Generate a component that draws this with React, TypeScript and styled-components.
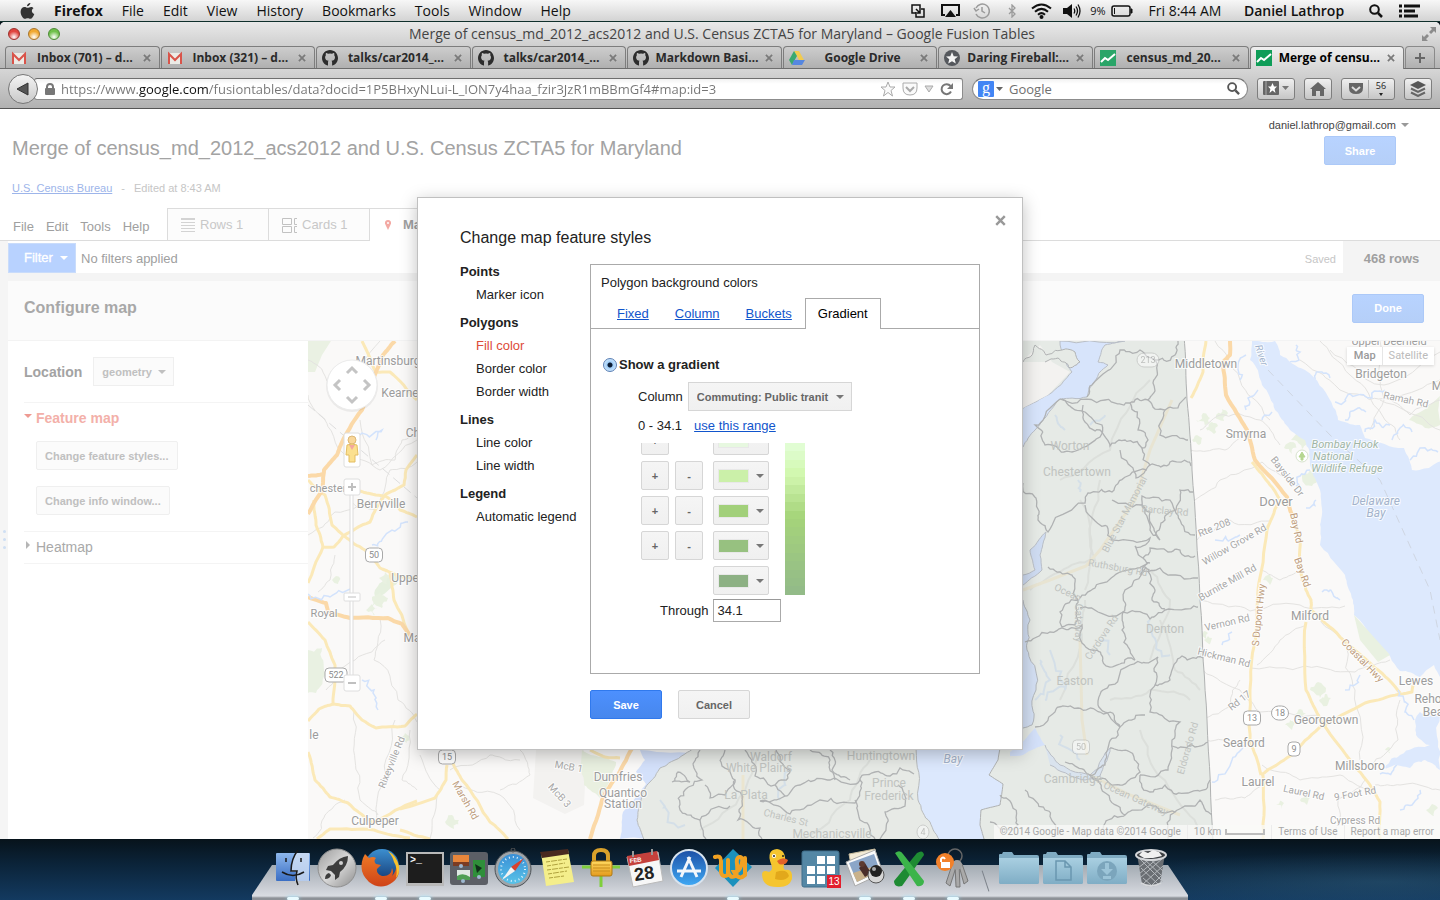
import React from "react";
import styled, { createGlobalStyle, css } from "styled-components";

const GlobalStyle = createGlobalStyle`
  * { box-sizing: border-box; }
  body { margin: 0; font-family: "Liberation Sans", Arial, sans-serif; font-size: 13px; color: #333; }
  button, input, select { font: inherit; color: inherit; margin: 0; }
  ul { list-style: none; margin: 0; padding: 0; }
  h1, h2, h3 { margin: 0; }
`;

const SYSTEM_FONT = `"Open Sans", "Noto Sans", sans-serif`;

/* ---------- desktop and menu bar ---------- */

const Desktop = styled.div`
  min-height: 100vh;
  display: flex;
  flex-direction: column;
  background: #07131b;
`;

const MenuBar = styled.header`
  height: 22px;
  display: flex;
  align-items: center;
  justify-content: space-between;
  padding: 0 20px;
  background: linear-gradient(#f7f7f7, #d3d3d3);
  border-bottom: 1px solid #10302c;
  font: 14px/20px ${SYSTEM_FONT};
  color: #111;
`;

const MenuList = styled.nav`
  display: flex;
  align-items: center;
  gap: 19px;
`;

const MenuButton = styled.button<{ $strong?: boolean }>`
  border: 0;
  padding: 0;
  background: none;
  white-space: nowrap;
  font-weight: ${(p) => (p.$strong ? 700 : 400)};
`;

const StatusArea = styled.div`
  display: flex;
  align-items: center;
`;

const StatusCell = styled.span<{ $width: number; $bold?: boolean; $small?: boolean }>`
  width: ${(p) => p.$width}px;
  display: flex;
  justify-content: center;
  white-space: nowrap;
  font-weight: ${(p) => (p.$bold ? 600 : 400)};
  font-size: ${(p) => (p.$small ? 11 : 14)}px;
`;

/* ---------- browser window ---------- */

const BrowserWindow = styled.div`
  flex: 1;
  display: flex;
  flex-direction: column;
  border-radius: 5px 5px 0 0;
  overflow: hidden;
  background: #fff;
`;

const ChromeTop = styled.div`
  background: linear-gradient(#e9e9e9, #cfcfcf 24px, #b4b4b4);
`;

const TitleBar = styled.div`
  height: 24px;
  display: grid;
  grid-template-columns: 80px 1fr 80px;
  align-items: center;
  padding: 0 4px 0 8px;
  font: 14px/20px ${SYSTEM_FONT};
  color: #444;
  text-align: center;
`;

const Lights = styled.div`
  display: flex;
  gap: 8px;
`;

const Light = styled.button<{ $color: string; $edge: string }>`
  width: 12px;
  height: 12px;
  padding: 0;
  border-radius: 50%;
  border: 1px solid ${(p) => p.$edge};
  background: radial-gradient(circle at 50% 80%, #fff 0, ${(p) => p.$color} 60%);
`;

const FullScreen = styled.button`
  justify-self: end;
  border: 0;
  padding: 0;
  background: none;
  display: flex;
`;

const TabStrip = styled.div`
  height: 23px;
  display: flex;
  gap: 1px;
  padding: 0 5px;
  border-bottom: 1px solid #6e6e6e;
`;

const BrowserTab = styled.div<{ $active?: boolean }>`
  flex: 1 1 0;
  min-width: 0;
  height: ${(p) => (p.$active ? 23 : 22)}px;
  display: flex;
  align-items: center;
  gap: 5px;
  padding: 0 8px 0 5px;
  border: 1px solid #7d7d7d;
  border-bottom: 0;
  border-radius: 4px 4px 0 0;
  background: ${(p) => (p.$active ? "linear-gradient(#efefef, #d6d6d6)" : "linear-gradient(#cdcdcd, #b0b0b0)")};
  color: ${(p) => (p.$active ? "#000" : "#2a2a2a")};
`;

const TabLabel = styled.span`
  flex: 1;
  text-align: center;
  white-space: nowrap;
  font: 700 12px/16px ${SYSTEM_FONT};
`;

const TabClose = styled.button`
  border: 0;
  padding: 0;
  background: none;
  display: flex;
`;

const NewTab = styled.button`
  width: 30px;
  height: 22px;
  display: flex;
  align-items: center;
  justify-content: center;
  padding: 0;
  border: 1px solid #8a8a8a;
  border-bottom: 0;
  border-radius: 4px 4px 0 0;
  background: linear-gradient(#cdcdcd, #b0b0b0);
`;

const NavBar = styled.div`
  height: 40px;
  display: flex;
  align-items: center;
  gap: 9px;
  padding: 0 8px;
  background: linear-gradient(#d6d6d6, #b1b1b1);
  border-bottom: 1px solid #555;
`;

const AddressGroup = styled.div`
  flex: 1;
  display: flex;
  align-items: center;
`;

const BackButton = styled.button`
  position: relative;
  z-index: 1;
  width: 30px;
  height: 30px;
  margin-right: -4px;
  display: flex;
  align-items: center;
  justify-content: center;
  padding: 0;
  border: 1px solid #777;
  border-radius: 50%;
  background: linear-gradient(#f4f4f4, #c9c9c9);
`;

const FieldBox = styled.div<{ $round?: boolean; $width?: number }>`
  ${(p) => (p.$width ? css`width: ${p.$width}px;` : css`flex: 1;`)}
  height: 22px;
  display: flex;
  align-items: center;
  gap: 6px;
  padding: 0 ${(p) => (p.$round ? 7 : 8)}px 0 ${(p) => (p.$round ? 5 : 10)}px;
  border: 1px solid #8c8c8c;
  border-top-color: #6f6f6f;
  border-radius: ${(p) => (p.$round ? 11 : 3)}px;
  background: linear-gradient(#f2f2f2, #fff 5px);
`;

const AddressInput = styled.input`
  flex: 1;
  min-width: 0;
  border: 0;
  padding: 0;
  outline: 0;
  font: 13px/18px ${SYSTEM_FONT};
  color: #707070;
  background: none;
`;

const UrlInput = styled(AddressInput)`
  background: linear-gradient(90deg, #757575 0 78px, #111 78px 147px, #757575 147px);
  -webkit-background-clip: text;
  background-clip: text;
  -webkit-text-fill-color: transparent;
`;

const ToolButton = styled.button<{ $width: number }>`
  width: ${(p) => p.$width}px;
  height: 22px;
  display: flex;
  align-items: center;
  justify-content: center;
  gap: 5px;
  padding: 0;
  border: 1px solid #7e7e7e;
  border-radius: 3px;
  background: linear-gradient(#efefef, #c6c6c6);
`;

/* ---------- page ---------- */

const Page = styled.main`
  position: relative;
  flex: 1;
  display: flex;
  flex-direction: column;
  background: #fff;
`;

const PageHeader = styled.div`
  display: flex;
  justify-content: space-between;
  height: 99px;
  padding: 0 32px 0 12px;
`;

const TitleBlock = styled.div`
  padding-top: 27px;
`;

const DocTitle = styled.h1`
  font-size: 20px;
  line-height: 24px;
  font-weight: 400;
  color: #a3a3a3;
`;

const SubLine = styled.div`
  display: flex;
  gap: 9px;
  margin-top: 21px;
  font-size: 11px;
  line-height: 14px;
  color: #c6c6c6;
`;

const FadedLink = styled.a`
  color: #9db5ea;
`;

const AccountBlock = styled.div`
  display: flex;
  flex-direction: column;
  align-items: flex-end;
  gap: 3px;
  padding: 8px 12px 0 0;
`;

const AccountButton = styled.button`
  display: flex;
  align-items: center;
  gap: 5px;
  margin-right: -13px;
  border: 0;
  padding: 0;
  background: none;
  font-size: 11px;
  line-height: 16px;
  color: #444;
`;

const Caret = styled.span<{ $color: string }>`
  border: 4px solid transparent;
  border-top-color: ${(p) => p.$color};
  border-bottom: 0;
`;

type Tone = "blue" | "fadedBlue" | "plain" | "faded";

const tones = {
  blue: css`
    border-color: #3079ed;
    background: linear-gradient(#4d90fe, #4787ed);
    color: #fff;
  `,
  fadedBlue: css`
    border-color: #acc9f8;
    background: linear-gradient(#b8d3ff, #b5cff8);
    color: #fff;
  `,
  plain: css`
    border-color: #d6d6d6;
    background: linear-gradient(#f5f5f5, #f0f0f0);
    color: #666;
  `,
  faded: css`
    border-color: #efefef;
    background: #fbfbfb;
    color: #c0c0c0;
  `,
};

const Button = styled.button<{ $tone: Tone; $width?: number }>`
  ${(p) => (p.$width ? css`width: ${p.$width}px; padding: 0;` : css`padding: 0 8px;`)}
  height: 29px;
  border: 1px solid;
  border-radius: 2px;
  font-size: 11px;
  font-weight: 700;
  line-height: 16px;
  white-space: nowrap;
  ${(p) => tones[p.$tone]}
`;

const TabsRow = styled.div`
  height: 33px;
  display: flex;
  align-items: stretch;
  border-bottom: 1px solid #dcdcdc;
`;

const AppMenu = styled.nav`
  width: 167px;
  display: flex;
  align-items: flex-end;
  gap: 12px;
  padding: 0 0 5px 13px;
`;

const AppMenuButton = styled.button`
  border: 0;
  padding: 0;
  background: none;
  font-size: 13px;
  line-height: 17px;
  color: #a0a0a0;
`;

const ViewTab = styled.button<{ $active?: boolean }>`
  width: 101px;
  display: flex;
  gap: 5px;
  padding: 8px 0 0 13px;
  border: 1px solid #dcdcdc;
  border-width: 1px 0 0 1px;
  background: ${(p) => (p.$active ? "#fff" : "#fcfcfc")};
  margin-bottom: ${(p) => (p.$active ? -1 : 0)}px;
  font-size: 13px;
  line-height: 15px;
  color: ${(p) => (p.$active ? "#a0a0a0" : "#c8c8c8")};
  font-weight: ${(p) => (p.$active ? 700 : 400)};
`;

const Workspace = styled.div`
  flex: 1;
  display: flex;
`;

const Gutter = styled.div`
  width: 8px;
  display: flex;
  flex-direction: column;
  align-items: center;
  gap: 5px;
  padding-top: 289px;
  background: #f5f5f5;
`;

const GutterDot = styled.span`
  width: 3px;
  height: 3px;
  border-radius: 50%;
  background: #cfdff3;
`;

const WorkColumn = styled.div`
  flex: 1;
  display: flex;
  flex-direction: column;
`;

const FilterBar = styled.div`
  display: flex;
  align-items: stretch;
  height: 40px;
  border-bottom: 8px solid #f4f4f4;
  color: #a0a0a0;
`;

const FilterButton = styled.button`
  display: flex;
  align-items: center;
  gap: 7px;
  width: 68px;
  height: 30px;
  align-self: flex-end;
  padding: 0 0 0 15px;
  border: 1px solid #c9dcfb;
  background: #b8d2ff;
  color: #fff;
  line-height: 16px;
  -webkit-text-stroke: 0.3px #fff;
`;

const FilterText = styled.span`
  flex: 1;
  align-self: center;
  padding: 3px 0 0 5px;
`;

const SavedText = styled.span`
  align-self: center;
  padding: 4px 7px 0 0;
  font-size: 11px;
  color: #c6c6c6;
`;

const RowCount = styled.strong`
  width: 97px;
  padding-top: 10px;
  text-align: center;
  background: #f4f4f4;
  line-height: 16px;
`;

const ConfigHeader = styled.div`
  height: 60px;
  display: flex;
  align-items: center;
  justify-content: space-between;
  padding: 0 16px 5px;
  background: #fbfbfb;
  border-bottom: 1px solid #f3f3f3;
`;

const ConfigTitle = styled.h2`
  font-size: 16px;
  line-height: 20px;
  color: #a8a8a8;
`;

const Panels = styled.div`
  flex: 1;
  display: flex;
`;

const SidePanel = styled.aside`
  width: 300px;
  padding-left: 16px;
  font-size: 14px;
  line-height: 16px;
  color: #a3a3a3;
`;

const LocationRow = styled.label`
  display: flex;
  align-items: center;
  gap: 11px;
  height: 61px;
  font-weight: 700;
`;

const SelectShell = styled.span<{ $arrow: string }>`
  position: relative;
  display: inline-flex;
  &::after {
    content: "";
    position: absolute;
    right: 8px;
    top: 13px;
    pointer-events: none;
    border: 4px solid transparent;
    border-top-color: ${(p) => p.$arrow};
    border-bottom: 0;
  }
`;

const Select = styled.select<{ $tone: Tone; $width: number }>`
  appearance: none;
  width: ${(p) => p.$width}px;
  height: 29px;
  padding: 0 16px 0 8px;
  border: 1px solid;
  border-radius: 0;
  font-size: 11px;
  font-weight: 700;
  ${(p) => tones[p.$tone]}
`;

const Section = styled.section`
  border-top: 1px solid #f4f4f4;
`;

const SectionToggle = styled.button<{ $open?: boolean }>`
  display: flex;
  align-items: center;
  width: 100%;
  height: 31px;
  padding: 0 0 2px;
  border: 0;
  background: none;
  color: ${(p) => (p.$open ? "#f3b0a9" : "#a9a9a9")};
  font-weight: ${(p) => (p.$open ? 700 : 400)};
  &::before {
    content: "";
    width: 0;
    height: 0;
    margin: 0 4px 4px 0;
    ${(p) =>
      p.$open
        ? css`
            border: 4px solid transparent;
            border-top-color: #ee9a92;
            border-bottom: 0;
          `
        : css`
            margin: 0 6px 4px 2px;
            border: 4px solid transparent;
            border-left-color: #b5b5b5;
            border-right: 0;
          `}
  }
`;

const SectionActions = styled.div`
  display: flex;
  flex-direction: column;
  align-items: flex-start;
  gap: 16px;
  padding: 7px 0 16px 12px;
`;

/* ---------- map ---------- */

const MapArea = styled.div`
  position: relative;
  flex: 1;
  display: grid;
  overflow: hidden;
`;

const MapSvg = styled.svg`
  display: block;
  width: 100%;
  height: 100%;
  min-height: 0;
  font-family: Roboto, sans-serif;
`;

const MapTypes = styled.div`
  position: absolute;
  top: 6px;
  right: 6px;
  display: flex;
  background: #fff;
  box-shadow: 0 1px 3px rgba(0, 0, 0, 0.15);
`;

const MapTypeButton = styled.button<{ $active?: boolean }>`
  height: 18px;
  padding: 0 6px;
  border: 0;
  border-left: 1px solid ${(p) => (p.$active ? "transparent" : "#e6e6e6")};
  background: none;
  font: ${(p) => (p.$active ? 500 : 400)} 11px/18px Roboto, sans-serif;
  color: ${(p) => (p.$active ? "#999" : "#bbb")};
`;

const MapFooter = styled.div`
  position: absolute;
  right: 0;
  bottom: 0;
  display: flex;
  height: 14px;
  align-items: center;
  background: rgba(250, 249, 248, 0.75);
  font: 10px/14px Roboto, sans-serif;
  color: #a8a8a8;
`;

const FooterCell = styled.span`
  display: flex;
  align-items: center;
  gap: 4px;
  padding: 0 6px;
  white-space: nowrap;
  & + & { border-left: 1px solid #ececec; }
`;

const FooterLink = styled.a`
  color: inherit;
  text-decoration: none;
`;

const ScaleBar = styled.span`
  width: 40px;
  height: 6px;
  border: 2px solid #bdbdbd;
  border-top: 0;
`;

/* ---------- dialog ---------- */

const Dialog = styled.section`
  position: absolute;
  top: 88px;
  left: 50%;
  transform: translateX(-50%);
  width: 606px;
  padding: 30px 42px;
  border: 1px solid #c0c0c0;
  background: #fff;
  box-shadow: 0 4px 16px rgba(0, 0, 0, 0.25);
  font-size: 13px;
  line-height: 16px;
  color: #222;
`;

const CloseButton = styled.button`
  position: absolute;
  top: 17px;
  right: 16px;
  display: flex;
  border: 0;
  padding: 0;
  background: none;
`;

const DialogTitle = styled.h2`
  font-size: 16px;
  line-height: 20px;
  font-weight: 400;
  margin-bottom: 16px;
`;

const DialogBody = styled.div`
  display: flex;
`;

const StyleNav = styled.nav`
  width: 130px;
`;

const NavGroup = styled.div`
  margin-bottom: 8px;
`;

const NavHeading = styled.h3`
  font-size: 13px;
  line-height: 16px;
  margin-bottom: 4px;
`;

const NavItem = styled.button<{ $selected?: boolean }>`
  display: block;
  height: 23px;
  padding: 0 0 1px 16px;
  border: 0;
  background: none;
  white-space: nowrap;
  color: ${(p) => (p.$selected ? "#dd4b39" : "#222")};
`;

const StylePanel = styled.div`
  flex: 1;
  min-height: 410px;
  border: 1px solid #aaa;
`;

const PanelLabel = styled.div`
  padding: 10px 10px 7px;
`;

const PanelTabs = styled.div`
  display: flex;
  height: 31px;
  padding-left: 13px;
  border-bottom: 1px solid #aaa;
`;

const PanelTab = styled.a`
  padding: 8px 13px 0;
  color: #15c;
`;

const ActivePanelTab = styled.a`
  padding: 7px 12px 0;
  margin-bottom: -1px;
  border: 1px solid #aaa;
  border-bottom: 0;
  background: #fff;
  color: #000;
  text-decoration: none;
`;

const GradientForm = styled.div`
  padding: 27px 12px 0;
`;

const RadioRow = styled.label`
  display: flex;
  align-items: center;
  gap: 2px;
  height: 18px;
  font-weight: 700;
`;

const Radio = styled.input`
  appearance: none;
  width: 14px;
  height: 14px;
  border: 1px solid #5b7fb4;
  border-radius: 50%;
  background: radial-gradient(circle, #0b1c33 0 2px, #9fcdf8 3px, #d5ecfd 7px);
`;

const ColumnRow = styled.label`
  display: flex;
  align-items: center;
  gap: 5px;
  margin: 8px 0 0 35px;
`;

const RangeRow = styled.div`
  display: flex;
  gap: 12px;
  margin: 7px 0 9px 35px;
`;

const TextLink = styled.a`
  color: #15c;
`;

const StopsArea = styled.div`
  height: 152px;
  display: flex;
  align-items: stretch;
  gap: 16px;
  margin-left: 38px;
  overflow: hidden;
`;

const StopList = styled.div`
  display: flex;
  flex-direction: column;
  justify-content: flex-end;
  gap: 6px;
  width: 128px;
`;

const StopRow = styled.div`
  flex: none;
  display: grid;
  grid-template-columns: 28px 28px 56px;
  grid-template-areas: "plus minus color";
  column-gap: 6px;
  & > :last-child { grid-area: color; margin-left: 4px; }
`;

const ColorButton = styled.button`
  width: 56px;
  height: 29px;
  display: flex;
  align-items: center;
  gap: 7px;
  padding: 0 4px;
  border: 1px solid #d6d6d6;
  border-radius: 2px;
  background: linear-gradient(#f5f5f5, #f0f0f0);
`;

const Swatch = styled.span<{ $color: string }>`
  width: 32px;
  height: 14px;
  border: 1px solid #e8e8e8;
  background: ${(p) => p.$color};
`;

const Ramp = styled.div`
  width: 20px;
  display: flex;
  flex-direction: column;
`;

const RampBand = styled.span<{ $color: string }>`
  flex: 1;
  background: ${(p) => p.$color};
`;

const ThroughRow = styled.label`
  display: flex;
  align-items: center;
  gap: 5px;
  margin: 4px 0 0 57px;
`;

const ThroughInput = styled.input`
  width: 68px;
  height: 23px;
  padding: 0 3px;
  border: 1px solid #aaa;
  border-top-color: #999;
`;

const DialogActions = styled.div`
  display: flex;
  gap: 16px;
  margin: 16px 0 0 130px;
`;

/* ---------- dock ---------- */

const DockWrap = styled.footer`
  height: 61px;
  display: flex;
  justify-content: center;
  background:
    radial-gradient(ellipse 300px 30px at 96% 70%, rgba(60, 110, 140, 0.35), transparent),
    linear-gradient(#07131b, #0b2338 24px, #133a60);
`;

const Dock = styled.ul`
  position: relative;
  display: flex;
  width: 936px;
  padding: 9px 15px 0 19px;
  &::before {
    content: "";
    position: absolute;
    left: 0;
    right: 0;
    top: 26px;
    bottom: 0;
    background: linear-gradient(#a3abb3, #c4c8cf 55%, #d9dce2 31px, #8d9197 33px);
    clip-path: polygon(20px 0, 916px 0, 100% 30px, 100% 100%, 0 100%, 0 30px);
  }
`;

const DockItem = styled.li<{ $running?: boolean }>`
  position: relative;
  width: 44px;
  display: flex;
  justify-content: center;
  ${(p) =>
    p.$running &&
    css`
      &::after {
        content: "";
        position: absolute;
        bottom: 0;
        left: 16px;
        width: 12px;
        height: 3px;
        border-radius: 2px;
        background: #e9fbff;
        box-shadow: 0 0 4px #9be3ff;
      }
    `}
`;

const DockSeparator = styled.li`
  position: relative;
  width: 22px;
  &::before {
    content: "";
    position: absolute;
    left: 10px;
    top: 22px;
    height: 22px;
    border-left: 1px solid #7c828a;
    transform: rotate(-18deg);
  }
`;

/* ---------- map drawing ---------- */

type Pt = [number, number];

/* Breaks each segment into a wandering line, the same on every render. */
function wander(points: Pt[], amount: number, seed = 1): string {
  let s = seed * 9301 + 49297;
  const rnd = () => {
    s = (s * 1103515245 + 12345) % 2147483648;
    return s / 2147483648 - 0.5;
  };
  let pts = points;
  for (let level = 0; level < 3; level++) {
    const next: Pt[] = [pts[0]];
    for (let i = 1; i < pts.length; i++) {
      const [x0, y0] = pts[i - 1];
      const [x1, y1] = pts[i];
      const len = Math.hypot(x1 - x0, y1 - y0);
      if (len > 4) {
        const d = Math.min(len * amount, 9);
        next.push([(x0 + x1) / 2 + rnd() * d, (y0 + y1) / 2 + rnd() * d]);
      }
      next.push([x1, y1]);
    }
    pts = next;
  }
  return "M" + pts.map(([x, y]) => x.toFixed(1) + " " + y.toFixed(1)).join("L");
}

const landRoads: Pt[][] = [
  [[308, 360], [330, 385], [345, 370], [380, 341]],
  [[308, 395], [325, 420], [345, 455], [380, 470], [417, 440]],
  [[360, 420], [372, 465], [395, 460], [402, 440], [417, 436]],
  [[350, 500], [375, 510], [390, 470], [417, 462]],
  [[308, 535], [335, 512], [370, 500]],
  [[335, 555], [330, 580], [318, 592]],
  [[380, 618], [374, 660], [398, 700], [417, 722]],
  [[326, 690], [355, 660], [385, 640]],
  [[354, 710], [355, 760], [360, 800], [378, 815]],
  [[313, 838], [325, 815], [345, 800]],
  [[395, 720], [385, 780], [377, 822]],
  [[410, 730], [402, 780], [417, 790]],
  [[420, 755], [440, 790], [430, 839]],
  [[450, 770], [490, 755], [520, 760]],
  [[460, 785], [500, 795], [520, 830]],
  [[500, 790], [530, 775], [520, 750]],
  [[1200, 430], [1220, 415], [1260, 420], [1280, 445]],
  [[1195, 500], [1220, 480], [1262, 462], [1290, 480]],
  [[1190, 450], [1225, 450], [1245, 430]],
  [[1197, 540], [1230, 520], [1270, 521]],
  [[1200, 600], [1250, 611], [1300, 605], [1345, 606]],
  [[1203, 670], [1240, 690], [1260, 712], [1320, 715]],
  [[1202, 720], [1230, 706], [1240, 680]],
  [[1251, 668], [1305, 666], [1355, 672], [1390, 660]],
  [[1257, 665], [1280, 640], [1306, 625]],
  [[1311, 612], [1345, 640], [1355, 690], [1360, 760]],
  [[1262, 570], [1280, 580], [1300, 570]],
  [[1205, 740], [1250, 740]],
  [[1215, 800], [1245, 798], [1262, 785]],
  [[1262, 765], [1300, 780], [1340, 775], [1370, 790]],
  [[1375, 785], [1400, 785], [1440, 790]],
  [[1335, 839], [1338, 800], [1365, 780]],
  [[1400, 700], [1398, 740], [1372, 765]],
  [[1300, 360], [1340, 390], [1390, 400], [1440, 380]],
  [[1320, 341], [1350, 375], [1385, 420], [1400, 440]],
  [[1380, 400], [1440, 430]],
  [[1380, 341], [1384, 400], [1370, 430]],
  [[1215, 341], [1240, 380], [1270, 420]],
  [[1330, 350], [1384, 385], [1440, 352]],
  [[1384, 395], [1410, 415], [1440, 400]],
];

const minorRoads: Pt[][] = [
  [[308, 480], [325, 495], [332, 525], [344, 536], [365, 550], [380, 568], [400, 577], [417, 578]],
  [[343, 536], [334, 547], [323, 547], [316, 525], [314, 500]],
  [[323, 547], [308, 583]],
  [[360, 491], [385, 496], [400, 510], [417, 517]],
  [[417, 455], [406, 470], [404, 485], [385, 495], [370, 522], [343, 536]],
  [[390, 572], [394, 600], [408, 632]],
  [[308, 622], [325, 640], [335, 665], [333, 704], [319, 709], [308, 721]],
  [[333, 704], [350, 706], [362, 720], [376, 728], [405, 726], [417, 714]],
  [[308, 752], [315, 780], [330, 797], [348, 803], [374, 823], [417, 801]],
  [[317, 839], [330, 829], [374, 830], [410, 838]],
  [[362, 341], [376, 372], [390, 372], [417, 400]],
  [[447, 765], [446, 780], [435, 798], [400, 809]],
  [[452, 762], [462, 780], [490, 822], [508, 839]],
  [[400, 830], [430, 839]],
  [[590, 750], [605, 757], [620, 758]],
  [[1206, 341], [1203, 372], [1191, 398]],
  [[1278, 503], [1267, 530], [1258, 590], [1257, 620], [1250, 690], [1250, 740], [1261, 775]],
  [[1252, 462], [1270, 485], [1284, 505]],
  [[1261, 775], [1292, 755], [1320, 727], [1365, 703], [1400, 694], [1412, 692], [1414, 682]],
  [[1292, 515], [1300, 540], [1302, 580], [1311, 600], [1311, 610], [1340, 637], [1375, 668], [1400, 693]],
  [[1306, 622], [1306, 690], [1320, 720], [1350, 760], [1370, 785], [1380, 802], [1380, 839]],
  [[1263, 775], [1263, 839]],
];

const majorRoads: Pt[][] = [
  [[395, 341], [383, 355], [376, 372], [362, 410], [343, 440], [337, 455], [324, 470], [323, 490], [308, 514]],
  [[308, 476], [324, 474]],
  [[308, 597], [326, 603], [328, 612], [350, 618], [388, 618], [402, 624], [412, 638]],
  [[634, 745], [618, 775], [602, 800], [590, 839]],
  [[1230, 341], [1230, 355], [1223, 362], [1226, 395], [1247, 430], [1255, 460], [1287, 497], [1292, 515]],
];

const streams: Pt[][] = [
  [[360, 435], [382, 430], [376, 440]], [[308, 594], [330, 597], [352, 590]], [[372, 545], [392, 530], [408, 522]],
  [[362, 680], [374, 690], [378, 710]], [[1212, 782], [1232, 760], [1243, 745]], [[1215, 540], [1240, 535]],
  [[1222, 645], [1232, 632]], [[1345, 690], [1360, 675]], [[1290, 362], [1300, 352], [1296, 345]],
  [[1310, 380], [1322, 372], [1330, 378]], [[1335, 402], [1350, 394], [1372, 398], [1385, 390]], [[1345, 420], [1358, 408], [1366, 412]],
  [[1365, 432], [1375, 420], [1390, 425]], [[1392, 440], [1400, 428], [1412, 432]], [[1410, 460], [1420, 448], [1438, 452]],
  [[1246, 355], [1238, 365], [1240, 380]], [[1258, 390], [1248, 398], [1246, 410]], [[1272, 412], [1262, 420]],
  [[1310, 470], [1300, 476], [1296, 486]], [[1316, 500], [1306, 508]], [[1340, 600], [1330, 590], [1322, 592]],
  [[1398, 690], [1405, 712], [1414, 720]], [[1400, 762], [1392, 772], [1380, 774]], [[1420, 790], [1412, 805], [1400, 810]],
];

const zipLines: Pt[][] = [
  [[1087, 397], [1092, 385], [1120, 350], [1140, 350], [1155, 360], [1153, 383], [1148, 400], [1130, 403], [1105, 400], [1060, 399]],
  [[1130, 403], [1138, 430], [1148, 440], [1142, 448], [1125, 440], [1110, 446], [1100, 430], [1085, 422], [1083, 405]],
  [[1148, 400], [1165, 410], [1160, 435], [1188, 440]],
  [[1165, 410], [1186, 397]],
  [[1060, 399], [1035, 425], [1045, 445], [1072, 452], [1100, 437], [1102, 425], [1075, 410], [1062, 399]],
  [[1155, 360], [1175, 355], [1178, 341]],
  [[1142, 448], [1150, 465], [1136, 478], [1120, 450]],
  [[1150, 465], [1170, 462], [1191, 466]],
  [[1023, 483], [1036, 498], [1038, 520], [1048, 532], [1085, 503], [1088, 493], [1112, 492], [1130, 475], [1147, 470]],
  [[1085, 505], [1100, 525], [1112, 540], [1150, 538], [1135, 546], [1145, 560], [1150, 563]],
  [[1112, 500], [1145, 508], [1150, 530], [1160, 540], [1150, 512], [1142, 496], [1170, 500], [1180, 520], [1195, 535]],
  [[1155, 535], [1165, 520], [1176, 510], [1180, 490], [1194, 492]],
  [[1143, 558], [1150, 548], [1168, 552], [1180, 550], [1195, 556]],
  [[1148, 563], [1140, 575], [1160, 568], [1170, 575], [1198, 578]],
  [[1048, 567], [1060, 572], [1072, 575], [1078, 600], [1075, 625], [1062, 627], [1060, 612], [1078, 600]],
  [[1080, 598], [1095, 588], [1120, 572], [1148, 563]],
  [[1123, 612], [1125, 590], [1145, 567], [1155, 590], [1152, 600], [1165, 609]],
  [[1080, 608], [1123, 612], [1150, 619], [1165, 610], [1198, 607]],
  [[1123, 612], [1122, 630], [1130, 650], [1135, 660]],
  [[1025, 642], [1050, 632], [1062, 628], [1082, 625], [1082, 643], [1097, 650], [1106, 666], [1128, 658], [1135, 660]],
  [[1158, 657], [1130, 665], [1103, 690], [1098, 705], [1120, 727]],
  [[1203, 658], [1182, 656], [1170, 680], [1155, 685], [1158, 657]],
  [[1155, 685], [1150, 712], [1180, 722], [1172, 740], [1168, 770], [1140, 775]],
  [[1035, 727], [1055, 712], [1078, 708], [1100, 712], [1120, 727], [1145, 715]],
  [[1120, 727], [1108, 748], [1105, 765], [1090, 775], [1065, 762]],
  [[1110, 748], [1130, 752], [1140, 772], [1120, 785], [1090, 775]],
  [[1172, 746], [1195, 747], [1208, 742]],
  [[1090, 775], [1110, 800], [1125, 815], [1108, 820], [1100, 835]],
  [[1140, 775], [1150, 792], [1165, 785], [1188, 793], [1210, 780]],
  [[1125, 815], [1150, 805], [1175, 812], [1168, 839]],
  [[1175, 812], [1200, 800], [1212, 815]],
  [[1025, 790], [1045, 810], [1055, 835]],
  [[1000, 795], [1012, 805], [1018, 825], [1005, 830], [990, 822]],
  [[700, 750], [694, 768], [702, 780], [685, 790], [680, 810], [700, 820], [730, 806]],
  [[672, 782], [678, 772], [690, 782], [672, 782]],
  [[725, 750], [722, 766], [735, 780], [725, 795], [710, 798], [705, 785]],
  [[745, 750], [755, 776], [775, 785], [790, 770], [776, 750]],
  [[775, 785], [785, 796], [760, 801], [790, 814], [820, 800], [855, 803], [860, 780], [830, 780], [800, 785], [785, 796]],
  [[810, 750], [830, 760], [835, 780]],
  [[735, 780], [742, 801], [738, 820], [760, 828], [762, 839]],
  [[860, 780], [875, 772], [890, 776], [900, 768], [914, 774]],
  [[880, 839], [885, 812], [905, 806], [898, 785]],
  [[855, 800], [860, 820], [875, 839]],
  [[830, 750], [832, 770], [850, 780]],
  [[700, 820], [706, 839]],
];

interface Place { t: string; x: number; y: number; s?: number; r?: number; k?: "in" | "road" | "park" | "water" | "hwy" }

const places: Place[] = [
  { t: "Martinsburg", x: 388, y: 365 }, { t: "Kearne", x: 400, y: 397 },
  { t: "chester", x: 328, y: 492, s: 11 }, { t: "Berryville", x: 381, y: 508 },
  { t: "Ch", x: 413, y: 437 }, { t: "Uppe", x: 405, y: 582 },
  { t: "Royal", x: 324, y: 617, s: 11 }, { t: "Ma", x: 412, y: 642 },
  { t: "le", x: 314, y: 739 }, { t: "Culpeper", x: 375, y: 825 },
  { t: "Rixeyville Rd", x: 391, y: 766, s: 10, r: -68, k: "road" },
  { t: "Marsh Rd", x: 466, y: 804, s: 10, r: 60, k: "hwy" },
  { t: "McB 1", x: 569, y: 770, s: 10, r: 10, k: "road" },
  { t: "McB 3", x: 560, y: 799, s: 10, r: 48, k: "road" },
  { t: "Dumfries", x: 618, y: 781 }, { t: "Quantico", x: 623, y: 797 },
  { t: "Station", x: 623, y: 808 },
  { t: "Waldorf", x: 771, y: 761, k: "in" }, { t: "White Plains", x: 759, y: 772, k: "in" },
  { t: "Huntingtown", x: 881, y: 760, k: "in" }, { t: "Prince", x: 889, y: 787, k: "in" },
  { t: "Frederick", x: 889, y: 800, k: "in" }, { t: "La Plata", x: 746, y: 799, k: "in" },
  { t: "Charles St", x: 786, y: 821, s: 10, r: 14, k: "in" },
  { t: "Mechanicsville", x: 832, y: 838, k: "in" }, { t: "Bay", x: 953, y: 763, k: "water" },
  { t: "Middletown", x: 1206, y: 368 }, { t: "Smyrna", x: 1246, y: 438 },
  { t: "Dover", x: 1276, y: 506, s: 13 }, { t: "Milford", x: 1310, y: 620 },
  { t: "Georgetown", x: 1326, y: 724 }, { t: "Seaford", x: 1244, y: 747 },
  { t: "Laurel", x: 1258, y: 786 }, { t: "Millsboro", x: 1360, y: 770 },
  { t: "Lewes", x: 1416, y: 685 }, { t: "Reho", x: 1428, y: 703 }, { t: "Bea", x: 1433, y: 716 },
  { t: "Upper Deerfield", x: 1389, y: 345, s: 11 }, { t: "Bridgeton", x: 1381, y: 378 },
  { t: "M", x: 1437, y: 390 }, { t: "Ramah Rd", x: 1406, y: 403, s: 10, r: 12, k: "road" },
  { t: "River", x: 1262, y: 359, s: 10, r: 72, k: "water" },
  { t: "Bombay Hook", x: 1345, y: 448, s: 11, k: "park" }, { t: "National", x: 1333, y: 460, s: 11, k: "park" },
  { t: "Wildlife Refuge", x: 1347, y: 472, s: 11, k: "park" },
  { t: "Delaware", x: 1376, y: 505, k: "water" }, { t: "Bay", x: 1376, y: 517, k: "water" },
  { t: "Bayside Dr", x: 1288, y: 480, s: 10, r: 52, k: "road" },
  { t: "Rte 208", x: 1214, y: 531, s: 10, r: -22, k: "road" },
  { t: "Willow Grove Rd", x: 1234, y: 548, s: 10, r: -30, k: "road" },
  { t: "Burnite Mill Rd", x: 1227, y: 586, s: 10, r: -29, k: "road" },
  { t: "Vernon Rd", x: 1227, y: 626, s: 10, r: -13, k: "road" },
  { t: "Hickman Rd", x: 1224, y: 661, s: 10, r: 14, k: "road" },
  { t: "Rd 17", x: 1239, y: 704, s: 10, r: -38, k: "road" },
  { t: "Laurel Rd", x: 1304, y: 796, s: 10, r: 12, k: "road" },
  { t: "9 Foot Rd", x: 1355, y: 797, s: 10, r: -10, k: "road" },
  { t: "Cypress Rd", x: 1355, y: 824, s: 10, k: "road" },
  { t: "S Dupont Hwy", x: 1258, y: 619, s: 10, r: -84, k: "hwy" },
  { t: "Bay Rd", x: 1297, y: 532, s: 10, r: 78, k: "hwy" },
  { t: "Bay Rd", x: 1303, y: 576, s: 10, r: 70, k: "hwy" },
  { t: "Coastal Hwy", x: 1363, y: 664, s: 10, r: 46, k: "hwy" },
  { t: "Worton", x: 1070, y: 450, k: "in" }, { t: "Chestertown", x: 1077, y: 476, k: "in" },
  { t: "Barclay Rd", x: 1165, y: 514, s: 10, r: 5, k: "in" }, { t: "Denton", x: 1165, y: 633, k: "in" },
  { t: "Easton", x: 1075, y: 685, k: "in" }, { t: "Cambridge", x: 1073, y: 783, k: "in" },
  { t: "Blue Star Memorial", x: 1124, y: 518, s: 10, r: -62, k: "in" },
  { t: "Ruthsburg Rd", x: 1118, y: 571, s: 10, r: 10, k: "in" },
  { t: "Ocean", x: 1068, y: 596, s: 10, r: 25, k: "in" },
  { t: "Gateway", x: 1079, y: 627, s: 10, r: 90, k: "in" },
  { t: "Cordova Rd", x: 1101, y: 641, s: 10, r: -56, k: "in" },
  { t: "Eldorado Rd", x: 1187, y: 752, s: 10, r: -74, k: "in" },
  { t: "Ocean Gateway", x: 1136, y: 802, s: 10, r: 24, k: "in" },
];

const labelColor = { in: "#c0c3c0", road: "#a8a8a8", park: "#9fb5a5", water: "#a3b3cc", hwy: "#bd9d7f" };

interface Shield { t: string; x: number; y: number; faded?: boolean; round?: boolean }
const shields: Shield[] = [
  { t: "50", x: 374, y: 555 }, { t: "522", x: 336, y: 675 }, { t: "15", x: 447, y: 757 },
  { t: "13", x: 1252, y: 718 }, { t: "18", x: 1280, y: 713, round: true }, { t: "9", x: 1294, y: 749 },
  { t: "50", x: 1081, y: 747, faded: true }, { t: "213", x: 1148, y: 360, faded: true, round: true },
  { t: "4", x: 923, y: 832, faded: true, round: true },
];

const greens: [number, number, number][] = [
  [1203, 420, 7], [1212, 428, 6], [1222, 415, 6], [1197, 440, 5], [1268, 375, 6], [1300, 440, 9],
  [1318, 455, 8], [1268, 580, 5], [1208, 640, 4], [1318, 690, 8], [1300, 715, 6], [1325, 700, 6],
  [1290, 725, 5], [1280, 805, 4], [1305, 800, 5], [1204, 635, 4], [1388, 750, 3], [1432, 810, 6],
  [380, 600, 8], [372, 610, 6], [385, 578, 6], [336, 580, 4], [405, 738, 5], [452, 822, 7],
  [1310, 478, 8], [1290, 448, 6], [1412, 478, 6],
];

const ink = "#b0b2b3";

const MapDrawing = () => (
  <MapSvg viewBox="308 341 1132 498" preserveAspectRatio="xMidYMid slice" role="img" aria-label="Map of Maryland and Delaware">
    <defs>
      <clipPath id="md">
        <path d="M1023 341L1184 341L1187 400L1192 470L1200 600L1207 720L1213 839L637 839L650 790L697 750L1023 750Z" />
      </clipPath>
    </defs>
    <rect x="308" y="341" width="1132" height="498" fill="#faf9f8" />
    {/* parks */}
    <path d="M308 341H331L322 355L315 372L308 372Z" fill="#eaf1e3" />
    <path d={wander([[308, 650], [322, 648], [324, 670], [316, 693], [308, 693], [308, 650]], 0.4, 3)} fill="#e9f1e2" />
    <path d={wander([[368, 612], [375, 590], [398, 574], [398, 582], [384, 594], [368, 612]], 0.3, 4)} fill="#e6f0df" />
    <path d="M536 750L584 750L585 785L584 805L565 814L533 798Z" fill="#f3f2f0" />
    <path d={wander([[582, 750], [605, 757], [616, 762], [612, 775], [600, 798], [584, 785], [582, 750]], 0.2, 6)} fill="#e9f0e0" />
    <path d={wander([[1409, 420], [1440, 396], [1440, 425], [1425, 428], [1409, 420]], 0.2, 7)} fill="#e9f0e0" />
    {greens.map(([x, y, r], i) => (
      <path key={i} d={wander([[x - r, y], [x, y - r], [x + r, y - 2], [x + 2, y + r], [x - r, y]], 0.6, i + 11)} fill="#e9f1e1" />
    ))}
    {landRoads.map((p, i) => (
      <path key={i} d={wander(p, 0.22, i + 2)} fill="none" stroke="#e4e3e1" strokeWidth="1" />
    ))}
    <path d="M308 405L417 498" stroke="#dedede" strokeDasharray="9 5" />
    {minorRoads.map((p, i) => (
      <path key={i} d={wander(p, 0.08, i + 5)} fill="none" stroke="#fbe9b8" strokeWidth="3" strokeLinejoin="round" />
    ))}
    {majorRoads.map((p, i) => (
      <path key={i} d={wander(p, 0.06, i + 9)} fill="none" stroke="#fbd9a8" strokeWidth="4" strokeLinejoin="round" />
    ))}
    {/* small streams */}
    {streams.map((p, i) => (
      <path key={i} d={wander(p, 0.7, i + 3)} fill="none" stroke="#d3e3fc" strokeWidth="1.500" />
    ))}
    {/* open water: Delaware Bay, rivers and the Chesapeake */}
    <path d={wander([[1252, 341], [1250, 360], [1262, 385], [1275, 410], [1290, 430], [1305, 440], [1310, 465], [1320, 490], [1321, 520], [1320, 545], [1345, 575], [1353, 600], [1354, 615], [1380, 645], [1400, 671], [1420, 677], [1434, 665], [1445, 700], [1450, 460], [1412, 470], [1404, 448], [1365, 438], [1360, 425], [1338, 420], [1330, 400], [1305, 370], [1280, 355], [1275, 341], [1252, 341]], 0.16, 8)} fill="#dde9fd" />
    <path d={wander([[1440, 715], [1420, 712], [1416, 735], [1430, 745], [1400, 755], [1384, 768], [1410, 768], [1425, 760], [1440, 770], [1440, 715]], 0.3, 12)} fill="#dde9fd" />
    <path d="M1354 615L1390 655L1378 662L1360 640Z" fill="#e9f1e1" />
    <path d="M1268 370L1330 435L1380 480L1430 590L1440 640" fill="none" stroke="#cfd6e2" strokeDasharray="8 6" />
    <path d={wander([[640, 750], [645, 760], [636, 772], [646, 784], [638, 795], [623, 812], [620, 839], [660, 839], [700, 750], [640, 750]], 0.12, 5)} fill="#d4e1fb" />
    <path d="M905 750H1040L1040 839H905Z" fill="#dce8fd" />
    {/* Maryland and its zip code areas */}
    <path d={wander([[697, 748], [675, 760], [660, 768], [650, 782], [641, 800], [637, 820], [645, 842], [940, 842], [930, 822], [918, 800], [916, 748]], 0.14, 2)} fill="#e7eae6" stroke="#b9bcbd" />
    <path d={wander([[1000, 748], [998, 760], [989, 775], [1003, 784], [1000, 805], [981, 810], [980, 825], [985, 842], [1213, 842], [1207, 720], [1200, 600], [1192, 470], [1187, 400], [1184, 336], [1015, 336], [1015, 748]], 0.02, 7)} fill="#e6eae6" stroke="#b0b2b2" />
    <g clipPath="url(#md)">
      <path d={wander([[1060, 341], [1072, 372], [1048, 395], [1023, 408], [1023, 447], [1035, 430], [1060, 399], [1087, 397], [1092, 385], [1108, 365], [1098, 362], [1105, 345], [1125, 341], [1060, 341]], 0.14, 9)} fill="#d7e4fb" stroke="#b9bec6" />
      <path d="M1023 360L1040 345L1052 362L1070 372L1048 395L1023 408Z" fill="#f3f2f0" />
      <path d={wander([[1023, 362], [1035, 345], [1046, 355], [1062, 350], [1075, 352], [1080, 362], [1070, 368], [1058, 358], [1045, 362]], 0.3, 4)} fill="#e6eae6" stroke={ink} />
      <path d={wander([[1023, 575], [1035, 570], [1030, 550], [1046, 532], [1040, 555], [1042, 570], [1023, 585]], 0.12, 6)} fill="#cfdcf2" stroke="#b9bec6" />
      <path d={wander([[1023, 600], [1030, 620], [1027, 650], [1036, 690], [1032, 725], [1023, 728]], 0.25, 6)} fill="#d4e0f4" stroke="#b3b8bd" />
      <path d={wander([[1010, 752], [1035, 728], [1045, 745], [1023, 755], [1010, 756]], 0.1, 6)} fill="#d4e1fa" />
      <path d={wander([[1045, 745], [1060, 765], [1090, 775], [1110, 748], [1100, 776], [1085, 780], [1050, 765]], 0.2, 6)} fill="#d9e3ee" stroke="#b9bec6" />
      {([[[1080, 500], [1095, 560], [1060, 572], [1030, 590]], [[1100, 480], [1090, 540], [1085, 590]], [[1150, 570], [1170, 600], [1150, 660]], [[1060, 700], [1082, 640], [1085, 600]], [[1110, 700], [1150, 690], [1190, 700]], [[1140, 730], [1170, 790], [1200, 830]],
        [[700, 830], [745, 790], [760, 752]], [[800, 839], [850, 800], [870, 760]], [[1060, 480], [1110, 450], [1150, 380]], [[1160, 620], [1175, 670], [1200, 690]]] as Pt[][]).map((p, i) => (
        <path key={i} d={wander(p, 0.2, i + 4)} fill="none" stroke="#dcdfdb" strokeWidth="2" />
      ))}
      <path d="M1172 400L1150 450L1135 500L1100 550L1086 566L1050 580L1023 590M1080 640L1082 720L1087 755M1090 775L1130 795L1180 815" fill="none" stroke="#e8e4d2" strokeWidth="3" />
      <path d="M743 775V839" stroke="#ebe5cf" strokeWidth="3" />
      {([[[1040, 660], [1050, 680], [1035, 700]], [[1050, 650], [1065, 690], [1045, 700]], [[1150, 620], [1158, 650], [1170, 655]], [[1100, 640], [1110, 655]], [[1055, 415], [1065, 430]], [[1090, 425], [1105, 415]], [[1060, 735], [1080, 760]], [[1078, 480], [1080, 492]], [[660, 800], [685, 825]], [[790, 770], [780, 800]]] as Pt[][]).map((p, i) => (
        <path key={i} d={wander(p, 0.8, i + 21)} fill="none" stroke="#d4dfe8" strokeWidth="2" />
      ))}
      {zipLines.map((p, i) => (
        <path key={i} d={wander(p, 0.42, i + 1)} fill="none" stroke={ink} strokeWidth="1.300" />
      ))}
    </g>
    {/* shields */}
    {shields.map((s, i) => {
      const w = s.t.length * 5 + 7;
      return (
        <g key={i} opacity={s.faded ? 0.45 : 1}>
          <rect x={s.x - w / 2} y={s.y - 7} width={w} height="14" rx={s.round ? 7 : 4} fill="#fff" stroke="#a9a9a9" />
          <text x={s.x} y={s.y + 3} fontSize="9" textAnchor="middle" fill="#8c8c8c">{s.t}</text>
        </g>
      );
    })}
    <circle cx="1302" cy="456" r="6" fill="#fff" stroke="#d7e3cd" />
    <path d="M1302 452L1305 457H1303V460H1301V457H1299Z" fill="#b5d690" stroke="#b5d690" />
    {places.map((p, i) => (
      <text
        key={i}
        x={p.x}
        y={p.y}
        fontSize={p.s ?? 12}
        textAnchor="middle"
        fill={p.k ? labelColor[p.k] : "#9c9c9c"}
        stroke={p.k === "in" ? "none" : "#fff"}
        strokeOpacity="0.8"
        strokeWidth="2"
        paintOrder="stroke"
        fontStyle={p.k === "water" || p.k === "park" ? "italic" : "normal"}
        transform={p.r ? `rotate(${p.r} ${p.x} ${p.y - 4})` : undefined}
      >
        {p.t}
      </text>
    ))}
    {/* pan, street view and zoom controls */}
    <circle cx="352" cy="386" r="26" fill="#000" opacity="0.06" />
    <circle cx="352" cy="385" r="25" fill="#fff" stroke="#ececec" />
    <path d="M347 373L352 368L357 373M347 397L352 402L357 397M340 380L335 385L340 390M364 380L369 385L364 390" fill="none" stroke="#c4c4c4" strokeWidth="3" />
    <rect x="350" y="490" width="3" height="190" fill="#fff" stroke="#dcdcdc" />
    <g fill="#fff" stroke="#dedede">
      <rect x="344" y="433" width="16" height="34" rx="2" />
      <rect x="344" y="479" width="16" height="16" rx="2" />
      <rect x="344" y="593" width="16" height="8" rx="1" />
      <rect x="344" y="675" width="16" height="16" rx="2" />
    </g>
    <path d="M348 487H356M352 483V491M348 683H356" stroke="#c0c0c0" strokeWidth="2" />
    <path d="M348 597H356" stroke="#c0c0c0" />
    <circle cx="352" cy="440" r="4" fill="#f9d79a" stroke="#dcb877" />
    <path d="M347 445Q352 443 357 445L358 455H355V462H349V455H346Z" fill="#fbe08f" stroke="#e3bd62" />
    <path d="M349 445H355L352 450Z" fill="#f3a7a0" />
  </MapSvg>
);

/* ---------- small drawings ---------- */

const CloseGlyph = ({ size = 9, color = "#7a7a7a" }: { size?: number; color?: string }) => (
  <svg width={size} height={size} viewBox="0 0 9 9" aria-hidden="true">
    <path d="M1 1L8 8M8 1L1 8" stroke={color} strokeWidth="2" />
  </svg>
);

const GmailIcon = () => (
  <svg width="16" height="16" viewBox="0 0 16 16" aria-hidden="true">
    <rect x="1" y="3" width="14" height="11" fill="#ecebe6" />
    <path d="M2 14V4L8 10L14 4V14" fill="none" stroke="#d9544a" strokeWidth="2" />
  </svg>
);

const GithubIcon = () => (
  <svg width="16" height="16" viewBox="0 0 16 16" aria-hidden="true">
    <path
      fill="#2d2d2d"
      d="M8 0C3.6 0 0 3.6 0 8c0 3.5 2.3 6.500 5.500 7.600.4.1.5-.2.5-.4v-3c0-.7.2-1.200.6-1.500-1.900-.2-3.500-.9-3.500-3.500 0-.8.3-1.500.8-2-.1-.3-.3-1.100.1-2.200 0 0 .7-.2 2.200.8a7.500 7.500 0 0 1 3.700 0c1.500-1 2.200-.8 2.200-.8.4 1.100.2 1.900.1 2.200.5.5.8 1.200.8 2 0 2.600-1.600 3.300-3.500 3.500.4.3.6.900.6 1.700v2.800c0 .2.1.5.500.400C13.700 14.500 16 11.500 16 8c0-4.400-3.600-8-8-8z"
    />
  </svg>
);

const DriveIcon = () => (
  <svg width="16" height="16" viewBox="0 0 16 16" aria-hidden="true">
    <path d="M5 1H10L15 10H10Z" fill="#f2cb4e" />
    <path d="M5 1L8 6L3 15L0 10Z" fill="#3aa970" />
    <path d="M5 10H16L13 15H3Z" fill="#5687e0" />
  </svg>
);

const StarIcon = () => (
  <svg width="16" height="16" viewBox="0 0 16 16" aria-hidden="true">
    <circle cx="8" cy="8" r="8" fill="#55585d" />
    <path d="M8 2L9.700 6.200L14 6.500L10.700 9.300L11.800 13.500L8 11.200L4.200 13.500L5.300 9.300L2 6.500L6.300 6.200Z" fill="#f4f4f4" />
  </svg>
);

const FusionIcon = ({ color }: { color: string }) => (
  <svg width="16" height="16" viewBox="0 0 16 16" aria-hidden="true">
    <rect width="16" height="16" fill={color} />
    <path d="M1 12L5 8L8 10L15 4" fill="none" stroke="#fff" strokeWidth="2" />
  </svg>
);

const AppleIcon = () => (
  <svg width="15" height="18" viewBox="0 0 15 18" aria-hidden="true">
    <path d="M10.500 1C10 3 8.500 4.200 7 4.200C7 2.500 8.500 1 10.500 1Z" fill="#222" />
    <path d="M13.500 6.200C11.200 7.500 11.300 10.900 14.300 12C13.500 14.400 12 16.800 10.400 16.800C9.300 16.800 9 16.200 7.700 16.200C6.400 16.200 6 16.800 5 16.800C3 16.800.6 13 .6 9.700C.6 6.700 2.500 5 4.500 5C5.900 5 6.800 5.800 7.700 5.800C8.500 5.800 9.500 4.900 11.200 4.900C12 4.900 13 5.400 13.500 6.200Z" fill="#333" />
  </svg>
);

const DuplicateIcon = () => (
  <svg width="14" height="14" viewBox="0 0 14 14" aria-hidden="true">
    <path d="M5 9H1V1H9V4M5 8V13H13V5H8M5 5L9 9M9 6V9H6" fill="none" stroke="#111" strokeWidth="1.500" />
  </svg>
);
const AirplayIcon = () => (
  <svg width="19" height="14" viewBox="0 0 19 14" aria-hidden="true">
    <path d="M4 11H1V1H18V11H15" fill="none" stroke="#111" strokeWidth="2" />
    <path d="M9.500 6L15 13H4Z" fill="#111" />
  </svg>
);
const TimeMachineIcon = () => (
  <svg width="17" height="16" viewBox="0 0 17 16" aria-hidden="true">
    <path d="M3 5A7 7 0 1 1 3 11M1 5L3 8L6 6M9 4V8L12 10" fill="none" stroke="#9b9b9b" strokeWidth="1.500" />
  </svg>
);
const BluetoothIcon = () => (
  <svg width="8" height="14" viewBox="0 0 8 14" aria-hidden="true">
    <path d="M1 4L7 10L4 13V1L7 4L1 10" fill="none" stroke="#9b9b9b" strokeWidth="1.300" />
  </svg>
);
const WifiIcon = () => (
  <svg width="21" height="16" viewBox="0 0 21 16" aria-hidden="true">
    <path d="M1 5.500Q10.500 -2.500 20 5.500M4 8.700Q10.500 3 17 8.700M7 11.800Q10.500 8.500 14 11.800" fill="none" stroke="#111" strokeWidth="2" />
    <circle cx="10.500" cy="14" r="2" fill="#111" />
  </svg>
);
const SpeakerIcon = () => (
  <svg width="18" height="16" viewBox="0 0 18 16" aria-hidden="true">
    <path d="M0 5H4L9 1V15L4 11H0Z" fill="#111" />
    <path d="M11 5.500Q12.500 8 11 10.500M13 3.500Q16 8 13 12.500M15 1.500Q19 8 15 14.500" fill="none" stroke="#111" strokeWidth="1.300" />
  </svg>
);
const BatteryIcon = () => (
  <svg width="22" height="12" viewBox="0 0 22 12" aria-hidden="true">
    <rect x="1" y="1" width="18" height="10" rx="2" fill="none" stroke="#111" strokeWidth="1.500" />
    <path d="M20 4H21V8H20Z" fill="#111" stroke="#111" />
    <rect x="3" y="3" width="1" height="6" fill="#111" />
  </svg>
);
const SearchIcon = ({ size, color }: { size: number; color: string }) => (
  <svg width={size} height={size} viewBox="0 0 14 14" aria-hidden="true">
    <circle cx="5.500" cy="5.500" r="4.300" fill="none" stroke={color} strokeWidth="2" />
    <path d="M9 9L13 13" stroke={color} strokeWidth="2.500" />
  </svg>
);
const ListIcon = () => (
  <svg width="21" height="14" viewBox="0 0 21 14" aria-hidden="true">
    <path d="M0 2H3M0 7H3M0 12H3M5 2H21M5 7H16M5 12H19" stroke="#111" strokeWidth="3" />
  </svg>
);

/* ---------- dock drawings ---------- */

const Art = ({ children }: { children: React.ReactNode }) => (
  <svg width="40" height="40" viewBox="0 0 40 40" aria-hidden="true">{children}</svg>
);

const folderArt = (mark: React.ReactNode) => (
  <Art>
    <path d="M0 7Q0 6 1 6H3L4 4H13L15 7H38Q40 7 40 9V34Q40 36 38 36H2Q0 36 0 34Z" fill="#7fabc2" />
    <path d="M0 10H40V34Q40 36 38 36H2Q0 36 0 34Z" fill="url(#folder)" />
    {mark}
  </Art>
);

const dockApps: { name: string; running?: boolean; art: React.ReactNode }[] = [
  { name: "Finder", running: true, art: (
    <Art>
      <rect x="3" y="5" width="34" height="28" rx="1" fill="url(#finder)" />
      <path d="M23 5H36V33H22L23 24H18Q18 12 23 5Z" fill="#d5e2f5" opacity="0.8" />
      <path d="M25 2Q18 11 18 23H24Q22 30 25 37" fill="none" stroke="#1a1a1a" strokeWidth="1.500" />
      <path d="M9 24Q20 31 31 24M13 10V14M28 10V14" fill="none" stroke="#1a1a1a" strokeWidth="1.500" />
    </Art>) },
  { name: "Launchpad", art: (
    <Art>
      <circle cx="20" cy="20" r="19" fill="url(#steel)" stroke="#8f8f8f" />
      <path d="M31 8Q22 9 16 17L11 18L9 22L14 23L18 27V32L22 29L23 24Q31 18 31 8Z" fill="#3d3d3d" />
      <path d="M12 25Q8 26 8 31Q13 31 14 27Z" fill="#3d3d3d" />
      <circle cx="24" cy="15" r="2" fill="#cfcfcf" />
    </Art>) },
  { name: "Firefox", running: true, art: (
    <Art>
      <circle cx="21" cy="18" r="17" fill="url(#ffblue)" />
      <path d="M2 10L4 6L8 10Q12 8 15 10Q12 13 15 16L20 17L16 21Q15 26 21 28Q30 29 31 20Q33 24 31 28Q37 22 35 12Q42 26 32 34Q20 43 8 34Q-3 24 2 10Z" fill="url(#fox)" />
      <path d="M27 3Q36 8 38 18Q39 25 35 30Q37 20 33 14Q32 9 27 3Z" fill="#f9c22d" />
    </Art>) },
  { name: "Terminal", running: true, art: (
    <Art>
      <rect x="1" y="4" width="38" height="34" fill="#b9b9b9" />
      <rect x="3" y="6" width="34" height="29" fill="#1d1d1d" />
      <text x="5" y="15" fontSize="10" fontWeight="700" fill="#f4f4f4" fontFamily="Liberation Mono, monospace">&gt;_</text>
    </Art>) },
  { name: "Mission Control", art: (
    <Art>
      <rect x="1" y="4" width="38" height="33" rx="3" fill="#5c5f66" />
      <rect x="4" y="7" width="16" height="11" fill="#e8863b" /><path d="M4 14H20V18H4Z" fill="#7b3c23" />
      <rect x="24" y="12" width="12" height="17" fill="#2f8f3a" /><path d="M26 16L33 20L28 25Z" fill="#10301a" />
      <rect x="8" y="22" width="13" height="10" fill="#dfe9e4" /><path d="M8 28Q14 24 21 29V32H8Z" fill="#4f9f55" />
      <circle cx="12" cy="18" r="2" fill="#9db8d0" /><circle cx="30" cy="29" r="2" fill="#9db8d0" /><circle cx="14" cy="33" r="2" fill="#9db8d0" />
    </Art>) },
  { name: "Safari", art: (
    <Art>
      <circle cx="20" cy="21" r="18" fill="#9fa4a8" stroke="#4c5257" />
      <circle cx="20" cy="21" r="15" fill="url(#sky)" />
      <circle cx="20" cy="21" r="12" fill="none" stroke="#dff1fb" strokeDasharray="1 3" strokeWidth="2" />
      <path d="M31 10L22 23L18 19Z" fill="#d8412f" /><path d="M9 32L18 19L22 23Z" fill="#f3f3f3" />
      <circle cx="20" cy="2" r="2" fill="none" stroke="#555" />
    </Art>) },
  { name: "Stickies", art: (
    <Art>
      <path d="M4 5L31 2L37 34L9 38Z" fill="#f4ee8b" />
      <path d="M3 4L31 1L32 6L5 10Z" fill="#4a2a20" />
      <path d="M9 14L30 11M10 18L28 15M10 22L32 19M11 26L30 23M12 30L27 28" stroke="#b0a23e" strokeDasharray="4 1 6 1" />
    </Art>) },
  { name: "VPN lock", art: (
    <Art>
      <path d="M1 19H39M20 26V39" stroke="#7fcf3c" strokeWidth="3" />
      <path d="M13 14V8Q13 2 20 2T27 8V14" fill="none" stroke="#d9a12b" strokeWidth="4" />
      <rect x="10" y="13" width="21" height="15" rx="2" fill="url(#gold)" stroke="#b27a12" />
      <path d="M12 17H29M12 20H29M12 23H29" stroke="#c98e1c" />
    </Art>) },
  { name: "Calendar", art: (
    <Art>
      <path d="M2 9L33 4L38 33L8 39Z" fill="#f7f7f7" stroke="#bbb" />
      <path d="M2 8L32 3L34 12L4 18Z" fill="#c5413c" />
      <path d="M8 3V9M27 1V7" stroke="#999" strokeWidth="2" />
      <text x="5" y="15" fontSize="6" fontWeight="700" fill="#fff" fontFamily="Liberation Sans, sans-serif" transform="rotate(-8 5 15)">FEB</text>
      <text x="10" y="33" fontSize="18" fontWeight="700" fill="#222" fontFamily="Liberation Sans, sans-serif" transform="rotate(-8 10 33)">28</text>
    </Art>) },
  { name: "App Store", art: (
    <Art>
      <circle cx="20" cy="20" r="18" fill="url(#store)" stroke="#d8e3ee" strokeWidth="2" />
      <path d="M12 29L21 9M28 29L19 9M8 23H32" stroke="#f2f6fb" strokeWidth="3" />
    </Art>) },
  { name: "TextWrangler", running: true, art: (
    <Art>
      <path d="M20 1L39 19L20 39L2 20Z" fill="#1a91bd" />
      <path d="M2 9Q8 7 8 13V24Q9 30 15 27V12M15 23Q17 31 22 28Q25 25 24 16Q23 9 27 9Q31 10 28 18Q26 24 21 24Q26 33 32 27V10" fill="none" stroke="#f0a122" strokeWidth="4" strokeLinecap="round" />
    </Art>) },
  { name: "Cyberduck", art: (
    <Art>
      <path d="M5 26Q6 21 12 24Q17 21 14 16Q9 2 20 1Q29 2 28 14Q25 20 28 22Q36 20 35 31Q32 40 20 39Q5 39 5 26Z" fill="#f5c52f" />
      <path d="M19 24Q30 20 32 28Q28 34 18 31Z" fill="#e2a81b" />
      <path d="M20 13Q26 8 31 12Q29 18 22 16Z" fill="#e2622a" />
      <circle cx="17" cy="8" r="2" fill="#fff" /><circle cx="17" cy="8" r="1" fill="#222" /><circle cx="26" cy="8" r="1" fill="#222" />
    </Art>) },
  { name: "Grid app", art: (
    <Art>
      <rect x="1" y="3" width="37" height="36" rx="2" fill="#5487a5" stroke="#406f8b" />
      <path d="M16 8H24V16H16ZM26 8H34V16H26ZM6 18H14V26H6ZM16 18H24V26H16ZM26 18H34V26H26ZM6 28H14V36H6ZM16 28H24V36H16Z" fill="#fff" />
      <rect x="26" y="27" width="14" height="13" fill="#e21e2d" />
      <text x="33" y="37" fontSize="10" textAnchor="middle" fill="#fff" fontFamily="Liberation Sans, sans-serif">13</text>
    </Art>) },
  { name: "Preview", running: true, art: (
    <Art>
      <path d="M4 6L30 1L34 22L8 28Z" fill="#f2ead5" stroke="#c9bd9f" />
      <path d="M1 14L30 2L38 25L10 38Z" fill="#fbfbfb" stroke="#aaa" />
      <path d="M4 15L29 6L35 23L12 34Z" fill="#8ba6c8" /><path d="M8 25L33 17L35 23L12 34Z" fill="#c9b28c" />
      <path d="M14 20L20 15L26 25L20 29Z" fill="#4b2e2a" /><circle cx="17" cy="16" r="3" fill="#5d3a30" />
      <circle cx="31" cy="27" r="8" fill="#d6d6d6" stroke="#555" /><circle cx="31" cy="23" r="6" fill="#222" /><circle cx="29" cy="21" r="2" fill="#aaa" />
    </Art>) },
  { name: "Excel", running: true, art: (
    <Art>
      <path d="M28 5Q34 1 35 7L13 38Q5 40 5 33Z" fill="#1e8b33" />
      <path d="M6 5Q11 1 14 6L35 33Q35 39 28 38Z" fill="#3cb44a" />
    </Art>) },
  { name: "Keychain", running: true, art: (
    <Art>
      <circle cx="22" cy="8" r="7" fill="none" stroke="#666" strokeWidth="1.500" />
      <path d="M20 14L24 16L17 38L13 35ZM25 14L29 16L35 33L31 36ZM22 16H26L27 39H23Z" fill="#a9a9a9" stroke="#777" />
      <circle cx="24" cy="17" r="5" fill="#a0a0a0" /><circle cx="12" cy="14" r="9" fill="#f2812a" />
      <rect x="8" y="14" width="9" height="6" fill="#fff" /><path d="M8 14V11Q10 8 12 11" fill="none" stroke="#fff" strokeWidth="2" />
    </Art>) },
];

const dockStacks: { name: string; art: React.ReactNode }[] = [
  { name: "Folder", art: folderArt(null) },
  { name: "Documents", art: folderArt(<path d="M13 13H22L28 19V32H13ZM22 13V19H28" fill="none" stroke="#6a97b0" strokeWidth="1.500" />) },
  { name: "Downloads", art: folderArt(<><circle cx="20" cy="23" r="10" fill="#7ba5bc" /><path d="M18 15H22V21H26L20 27L14 21H18ZM16 28H24V31H16Z" fill="#9cc4d8" /></>) },
  { name: "Trash", art: (
    <Art>
      <path d="M6 6L11 36Q20 41 29 36L34 6Z" fill="#6a6e73" />
      <path d="M8 10L32 34M12 10L31 28M18 10L32 23M10 20L28 37M12 30L20 37M32 10L9 30M27 10L8 26M20 10L7 20M32 18L12 36M30 28L20 38" stroke="#b4b8bc" />
      <ellipse cx="20" cy="7" rx="15" ry="5" fill="#3b3e42" stroke="#d5d7da" strokeWidth="2" />
      <path d="M8 7L12 3L17 5L22 2L28 4L31 8L22 10L13 10Z" fill="#f0f0f0" />
      <path d="M10 35Q20 41 30 35" fill="none" stroke="#d5d7da" strokeWidth="2" />
    </Art>) },
];

const HiddenSvg = styled.svg`
  position: absolute;
  width: 0;
  height: 0;
`;

const DockDefs = () => (
  <HiddenSvg aria-hidden="true">
    <defs>
      <linearGradient id="folder" x2="0" y2="1"><stop stopColor="#a9cfe1" /><stop offset="1" stopColor="#7fadc5" /></linearGradient>
      <linearGradient id="finder" x2="0" y2="1"><stop stopColor="#8db7ec" /><stop offset="1" stopColor="#3a6ec4" /></linearGradient>
      <linearGradient id="steel" x2="1" y2="1"><stop stopColor="#9a9a9a" /><stop offset="0.5" stopColor="#d9d9d9" /><stop offset="1" stopColor="#8d8d8d" /></linearGradient>
      <linearGradient id="ffblue" x2="0" y2="1"><stop stopColor="#3c8fd0" /><stop offset="1" stopColor="#12356f" /></linearGradient>
      <linearGradient id="fox" x2="0" y2="1"><stop stopColor="#ee7a26" /><stop offset="1" stopColor="#cf4318" /></linearGradient>
      <linearGradient id="sky" x2="0" y2="1"><stop stopColor="#3a8fd6" /><stop offset="1" stopColor="#59c3e8" /></linearGradient>
      <linearGradient id="gold" x2="0" y2="1"><stop stopColor="#ffd960" /><stop offset="1" stopColor="#e39a1d" /></linearGradient>
      <linearGradient id="store" x2="0" y2="1"><stop stopColor="#1d4fa5" /><stop offset="1" stopColor="#3fa9f5" /></linearGradient>
    </defs>
  </HiddenSvg>
);

/* ---------- data ---------- */

const menus = ["File", "Edit", "View", "History", "Bookmarks", "Tools", "Window", "Help"];

const tabs = [
  { icon: <GmailIcon />, label: "Inbox (701) – d…" },
  { icon: <GmailIcon />, label: "Inbox (321) – d…" },
  { icon: <GithubIcon />, label: "talks/car2014_…" },
  { icon: <GithubIcon />, label: "talks/car2014_…" },
  { icon: <GithubIcon />, label: "Markdown Basi…" },
  { icon: <DriveIcon />, label: "Google Drive" },
  { icon: <StarIcon />, label: "Daring Fireball:…" },
  { icon: <FusionIcon color="#2aa568" />, label: "census_md_20…" },
  { icon: <FusionIcon color="#0f9d58" />, label: "Merge of censu…", active: true },
];

const styleGroups = [
  { title: "Points", items: ["Marker icon"] },
  { title: "Polygons", items: ["Fill color", "Border color", "Border width"] },
  { title: "Lines", items: ["Line color", "Line width"] },
  { title: "Legend", items: ["Automatic legend"] },
];

const stops = [
  { color: "#e7f8e0", plus: true, minus: false },
  { color: "#cbf0a9", plus: true, minus: true },
  { color: "#a2d07a", plus: true, minus: true },
  { color: "#97c180", plus: true, minus: true },
  { color: "#8db184", plus: false, minus: false },
];

const ramp = [
  "#e1fdd3", "#dcfbc8", "#d7fabc", "#d2f8b0", "#ccf2a8", "#c2ea9d", "#b9e392", "#b0dc87", "#a7d67c",
  "#a4d27b", "#a2cf7d", "#a0cc7f", "#9ec980", "#9bc682", "#99c384", "#97c085", "#95be86", "#93bb88",
];

/* ---------- app ---------- */

export default function App() {
  return (
    <Desktop>
      <GlobalStyle />
      <DockDefs />
      <MenuBar>
        <MenuList aria-label="Application menu">
          <AppleIcon />
          <MenuButton $strong>Firefox</MenuButton>
          {menus.map((m) => (
            <MenuButton key={m}>{m}</MenuButton>
          ))}
        </MenuList>
        <StatusArea>
          <StatusCell $width={32}><DuplicateIcon /></StatusCell>
          <StatusCell $width={32}><AirplayIcon /></StatusCell>
          <StatusCell $width={31}><TimeMachineIcon /></StatusCell>
          <StatusCell $width={29}><BluetoothIcon /></StatusCell>
          <StatusCell $width={31}><WifiIcon /></StatusCell>
          <StatusCell $width={30}><SpeakerIcon /></StatusCell>
          <StatusCell $width={22} $small>9%</StatusCell>
          <StatusCell $width={26}><BatteryIcon /></StatusCell>
          <StatusCell $width={100}>Fri 8:44 AM</StatusCell>
          <StatusCell $width={118} $bold>Daniel Lathrop</StatusCell>
          <StatusCell $width={46}><SearchIcon size={14} color="#111" /></StatusCell>
          <ListIcon />
        </StatusArea>
      </MenuBar>

      <BrowserWindow>
        <ChromeTop>
          <TitleBar>
            <Lights>
              <Light $color="#e0443e" $edge="#9b2f2b" aria-label="Close window" />
              <Light $color="#f0a830" $edge="#a8742a" aria-label="Minimize window" />
              <Light $color="#6fc04a" $edge="#4c8a35" aria-label="Zoom window" />
            </Lights>
            <span>Merge of census_md_2012_acs2012 and U.S. Census ZCTA5 for Maryland – Google Fusion Tables</span>
            <FullScreen aria-label="Full screen">
              <svg width="14" height="14" viewBox="0 0 14 14" aria-hidden="true">
                <path d="M8 0H14V6L12 4L9 7L7 5L10 2ZM6 14H0V8L2 10L5 7L7 9L4 12Z" fill="#8c8c8c" />
              </svg>
            </FullScreen>
          </TitleBar>
          <TabStrip>
            {tabs.map((t, i) => (
              <BrowserTab key={i} $active={t.active}>
                {t.icon}
                <TabLabel>{t.label}</TabLabel>
                <TabClose aria-label="Close tab"><CloseGlyph size={8} /></TabClose>
              </BrowserTab>
            ))}
            <NewTab aria-label="New tab">
              <svg width="10" height="10" viewBox="0 0 10 10" aria-hidden="true"><path d="M5 0V10M0 5H10" stroke="#666" strokeWidth="2" /></svg>
            </NewTab>
          </TabStrip>
        </ChromeTop>
        <NavBar>
          <AddressGroup>
            <BackButton aria-label="Back">
              <svg width="12" height="14" viewBox="0 0 12 14" aria-hidden="true"><path d="M0 7L11 1V13Z" fill="#555" stroke="#333" /></svg>
            </BackButton>
            <FieldBox>
              <svg width="10" height="12" viewBox="0 0 10 12" aria-hidden="true">
                <path d="M2 6V4Q2 1 5 1T8 4V6" fill="none" stroke="#777" strokeWidth="2" />
                <rect y="5" width="10" height="7" rx="1" fill="#777" />
              </svg>
              <UrlInput aria-label="Address" defaultValue="https://www.google.com/fusiontables/data?docid=1P5BHxyNLui-L_ION7y4haa_fzir3JzR1mBBmGf4#map:id=3" />
              <svg width="16" height="16" viewBox="0 0 16 16" aria-hidden="true">
                <path d="M8 1L10 6H15L11 9.500L12.500 15L8 11.500L3.500 15L5 9.500L1 6H6Z" fill="#fafafa" stroke="#aaa" />
              </svg>
              <svg width="16" height="14" viewBox="0 0 16 14" aria-hidden="true">
                <path d="M1 1H15V6Q15 13 8 13T1 6Z" fill="#fafafa" stroke="#aaa" />
                <path d="M4 5L8 9L12 5" fill="none" stroke="#aaa" strokeWidth="2" />
              </svg>
              <svg width="10" height="8" viewBox="0 0 10 8" aria-hidden="true"><path d="M1 1H9L5 7Z" fill="#ddd" stroke="#aaa" /></svg>
              <svg width="14" height="14" viewBox="0 0 14 14" aria-hidden="true">
                <path d="M11 9.500A5 5 0 1 1 10.500 4" fill="none" stroke="#777" strokeWidth="2" />
                <path d="M13 1V7H7Z" fill="#777" />
              </svg>
            </FieldBox>
          </AddressGroup>
          <FieldBox $round $width={276}>
            <svg width="25" height="16" viewBox="0 0 25 16" aria-hidden="true">
              <rect width="16" height="16" rx="1" fill="#4285f4" />
              <text x="8" y="12" fontSize="16" textAnchor="middle" fill="#fff" fontFamily="Liberation Serif, serif">g</text>
              <path d="M18 6H25L21.500 10Z" fill="#666" />
            </svg>
            <AddressInput aria-label="Search" defaultValue="Google" />
            <SearchIcon size={13} color="#555" />
          </FieldBox>
          <ToolButton $width={38} aria-label="Bookmarks">
            <svg width="26" height="15" viewBox="0 0 26 15" aria-hidden="true">
              <rect width="16" height="14" rx="1" fill="#666" /><path d="M3 0V14" stroke="#aaa" />
              <path d="M9.500 2L11 5.500H14L11.600 8L12.500 12L9.500 9.500L6.500 12L7.400 8L5 5.500H8Z" fill="#fff" />
              <path d="M19 5H26L22.500 9Z" fill="#777" />
            </svg>
          </ToolButton>
          <ToolButton $width={28} aria-label="Home">
            <svg width="16" height="14" viewBox="0 0 16 14" aria-hidden="true"><path d="M8 0L16 7H14V14H10V9H6V14H2V7H0Z" fill="#666" /></svg>
          </ToolButton>
          <ToolButton $width={54} aria-label="Pocket">
            <svg width="20" height="18" viewBox="0 0 20 18" aria-hidden="true">
              <path d="M0 3H14V8Q14 14 7 14T0 8Z" fill="#666" /><path d="M3 7L7 10.500L11 7" fill="none" stroke="#ddd" strokeWidth="2" />
              <path d="M19.500 0V18" stroke="#aaa" />
            </svg>
            <svg width="14" height="16" viewBox="0 0 14 16" aria-hidden="true">
              <text x="7" y="8" fontSize="9" fontWeight="400" textAnchor="middle" fill="#222" fontFamily="Open Sans, sans-serif">56</text>
              <path d="M5 12H9L7 15Z" fill="#222" />
            </svg>
          </ToolButton>
          <ToolButton $width={28} aria-label="Layers">
            <svg width="16" height="16" viewBox="0 0 16 16" aria-hidden="true">
              <path d="M8 0L16 4L8 8L0 4Z" fill="#555" />
              <path d="M1 7.500L8 11L15 7.500M1 11.500L8 15L15 11.500" fill="none" stroke="#666" strokeWidth="2" />
            </svg>
          </ToolButton>
        </NavBar>

        <Page>
          <PageHeader>
            <TitleBlock>
              <DocTitle>Merge of census_md_2012_acs2012 and U.S. Census ZCTA5 for Maryland</DocTitle>
              <SubLine>
                <FadedLink href="#bureau">U.S. Census Bureau</FadedLink>
                <span>-</span>
                <span>Edited at 8:43 AM</span>
              </SubLine>
            </TitleBlock>
            <AccountBlock>
              <AccountButton>daniel.lathrop@gmail.com<Caret $color="#999" /></AccountButton>
              <Button $tone="fadedBlue" $width={72}>Share</Button>
            </AccountBlock>
          </PageHeader>
          <TabsRow>
            <AppMenu>
              {["File", "Edit", "Tools", "Help"].map((m) => (
                <AppMenuButton key={m}>{m}</AppMenuButton>
              ))}
            </AppMenu>
            <ViewTab>
              <svg width="14" height="16" viewBox="0 0 14 16" aria-hidden="true">
                <path d="M0 2H14" stroke="#d3d3d3" strokeWidth="2" />
                <path d="M0 5.500H14M0 8.500H14M0 11.500H14M0 14.500H14" stroke="#d3d3d3" />
              </svg>
              Rows 1
            </ViewTab>
            <ViewTab>
              <svg width="15" height="16" viewBox="0 0 15 16" aria-hidden="true">
                <path d="M.5 1.500H9.500V7.500H.5ZM.5 9.500H9.500V15.500H.5ZM15 1.500H12.500V7.500H15M15 9.500H12.500V15.500H15" fill="none" stroke="#c2c2c2" />
              </svg>
              Cards 1
            </ViewTab>
            <ViewTab $active>
              <svg width="15" height="16" viewBox="0 0 15 16" aria-hidden="true">
                <path d="M5 3A3.200 3.200 0 0 1 8 6.500Q7 9 5 13Q3 9 2 6.500A3.200 3.200 0 0 1 5 3Z" fill="#f3a9a3" /><circle cx="5" cy="6" r="1" fill="#fff" />
              </svg>
              Map
            </ViewTab>
          </TabsRow>
          <Workspace>
            <Gutter><GutterDot /><GutterDot /><GutterDot /></Gutter>
            <WorkColumn>
              <FilterBar>
                <FilterButton>Filter<Caret $color="#fff" /></FilterButton>
                <FilterText>No filters applied</FilterText>
                <SavedText>Saved</SavedText>
                <RowCount>468 rows</RowCount>
              </FilterBar>
              <ConfigHeader>
                <ConfigTitle>Configure map</ConfigTitle>
                <Button $tone="fadedBlue" $width={72}>Done</Button>
              </ConfigHeader>
              <Panels>
                <SidePanel>
                  <LocationRow>
                    Location
                    <SelectShell $arrow="#c0c0c0">
                      <Select $tone="faded" $width={81} defaultValue="geometry"><option>geometry</option></Select>
                    </SelectShell>
                  </LocationRow>
                  <Section>
                    <SectionToggle $open>Feature map</SectionToggle>
                    <SectionActions>
                      <Button $tone="faded">Change feature styles...</Button>
                      <Button $tone="faded">Change info window...</Button>
                    </SectionActions>
                  </Section>
                  <Section><SectionToggle>Heatmap</SectionToggle></Section>
                  <Section />
                </SidePanel>
                <MapArea>
                  <MapDrawing />
                  <MapTypes>
                    <MapTypeButton $active>Map</MapTypeButton>
                    <MapTypeButton>Satellite</MapTypeButton>
                  </MapTypes>
                  <MapFooter>
                    <FooterCell>©2014 Google - Map data ©2014 Google</FooterCell>
                    <FooterCell>10 km <ScaleBar /></FooterCell>
                    <FooterCell><FooterLink href="#terms">Terms of Use</FooterLink></FooterCell>
                    <FooterCell><FooterLink href="#report">Report a map error</FooterLink></FooterCell>
                  </MapFooter>
                </MapArea>
              </Panels>
            </WorkColumn>
          </Workspace>

          <Dialog role="dialog" aria-labelledby="dialog-title">
            <CloseButton aria-label="Close"><CloseGlyph size={11} color="#999" /></CloseButton>
            <DialogTitle id="dialog-title">Change map feature styles</DialogTitle>
            <DialogBody>
              <StyleNav aria-label="Feature styles">
                {styleGroups.map((g) => (
                  <NavGroup key={g.title}>
                    <NavHeading>{g.title}</NavHeading>
                    {g.items.map((item) => (
                      <NavItem key={item} $selected={item === "Fill color"}>{item}</NavItem>
                    ))}
                  </NavGroup>
                ))}
              </StyleNav>
              <StylePanel>
                <PanelLabel>Polygon background colors</PanelLabel>
                <PanelTabs>
                  <PanelTab href="#fixed">Fixed</PanelTab>
                  <PanelTab href="#column">Column</PanelTab>
                  <PanelTab href="#buckets">Buckets</PanelTab>
                  <ActivePanelTab href="#gradient">Gradient</ActivePanelTab>
                </PanelTabs>
                <GradientForm>
                  <RadioRow><Radio type="radio" name="mode" defaultChecked />Show a gradient</RadioRow>
                  <ColumnRow>
                    Column
                    <SelectShell $arrow="#777">
                      <Select $tone="plain" $width={164} defaultValue="Commuting: Public tranit"><option>Commuting: Public tranit</option></Select>
                    </SelectShell>
                  </ColumnRow>
                  <RangeRow><span>0 - 34.1</span><TextLink href="#range">use this range</TextLink></RangeRow>
                  <StopsArea>
                    <StopList>
                      {stops.map((s) => (
                        <StopRow key={s.color}>
                          {s.plus && <Button $tone="plain" $width={28} aria-label="Add color">+</Button>}
                          {s.minus && <Button $tone="plain" $width={28} aria-label="Remove color">-</Button>}
                          <ColorButton aria-label="Choose color"><Swatch $color={s.color} /><Caret $color="#777" /></ColorButton>
                        </StopRow>
                      ))}
                    </StopList>
                    <Ramp>{ramp.map((c) => <RampBand key={c} $color={c} />)}</Ramp>
                  </StopsArea>
                  <ThroughRow>Through<ThroughInput defaultValue="34.1" /></ThroughRow>
                </GradientForm>
              </StylePanel>
            </DialogBody>
            <DialogActions>
              <Button $tone="blue" $width={72}>Save</Button>
              <Button $tone="plain" $width={72}>Cancel</Button>
            </DialogActions>
          </Dialog>
        </Page>
      </BrowserWindow>

      <DockWrap>
        <Dock>
          {dockApps.map((a) => (
            <DockItem key={a.name} $running={a.running} aria-label={a.name}>{a.art}</DockItem>
          ))}
          <DockSeparator />
          {dockStacks.map((a) => (
            <DockItem key={a.name} aria-label={a.name}>{a.art}</DockItem>
          ))}
        </Dock>
      </DockWrap>
    </Desktop>
  );
}
